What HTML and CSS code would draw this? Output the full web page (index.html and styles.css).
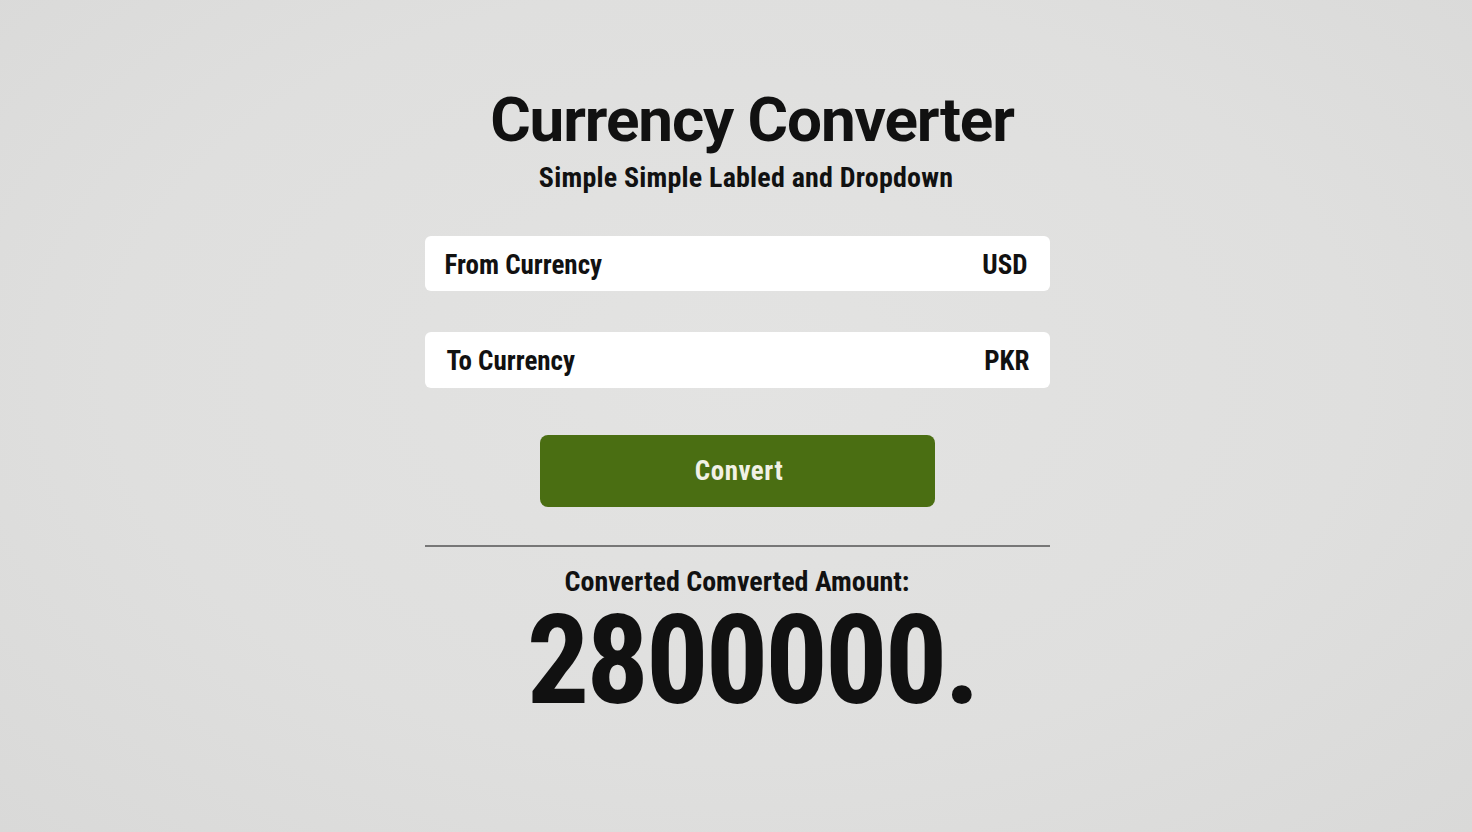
FILE: index.html
```html
<!DOCTYPE html>
<html lang="en">
<head>
<meta charset="utf-8">
<title>Currency Converter</title>
<link rel="stylesheet" href="styles.css">
</head>
<body>
<main class="page">
  <section class="card">
    <h1 class="title">Currency Converter</h1>
    <p class="subtitle">Simple Simple Labled and Dropdown</p>
    <div class="field"><span>From Currency</span><span>USD</span></div>
    <div class="field field-to"><span>To Currency</span><span>PKR</span></div>
    <button class="convert">Convert</button>
    <hr class="rule">
    <p class="result-label">Converted Comverted Amount:</p>
    <p class="result">2800000.</p>
  </section>
</main>
</body>
</html>
```
FILE: styles.css
```css
* { box-sizing: border-box; }
html, body { margin: 0; height: 100%; }
body {
  background: radial-gradient(ellipse at 50% 45%, #e3e3e2 0%, #dfdfde 60%, #d9d9d8 100%);
  font-family: "Roboto Condensed", "Liberation Sans Narrow", "DejaVu Sans Condensed", Roboto, sans-serif;
  color: #111;
}
.page { display: flex; justify-content: center; padding-top: 84px; }
.card { width: 625px; display: flex; flex-direction: column; align-items: stretch; margin-left: 2px; }
.title {
  margin: 0; padding-left: 30px; text-align: center; font-family: Roboto, sans-serif;
  font-size: 62px; font-weight: 700; line-height: 72px; letter-spacing: -1.1px;
}
.subtitle { margin: 4px 0 0; padding-left: 18px; text-align: center; font-size: 28px; font-weight: 700; line-height: 36px; letter-spacing: 0.2px; }
.field {
  margin-top: 40px; height: 55px; background: #fff; border-radius: 6px;
  display: flex; justify-content: space-between; align-items: center;
  padding: 2px 22px 0 20px; font-size: 27px; font-weight: 700;
}
.field-to { margin-top: 41px; height: 56px; padding-left: 22px; padding-right: 20px; }
.convert {
  margin: 47px auto 0; width: 395px; height: 72px; border: 0; border-radius: 8px;
  background: #4a6e12; color: #f1f1e6; font-family: inherit; font-size: 27px; font-weight: 700;
  letter-spacing: 0.5px; padding: 0 0 0 4px;
}
.rule { margin: 38px 0 0; border: 0; border-top: 2px solid #777; }
.result-label { margin: 18px 0 0; text-align: center; font-size: 28px; font-weight: 700; line-height: 34px; }
.result {
  margin: 12px 0 0; padding-left: 30px; text-align: center; font-size: 124px; font-weight: 700;
  line-height: 100px; letter-spacing: -3px;
}
```
